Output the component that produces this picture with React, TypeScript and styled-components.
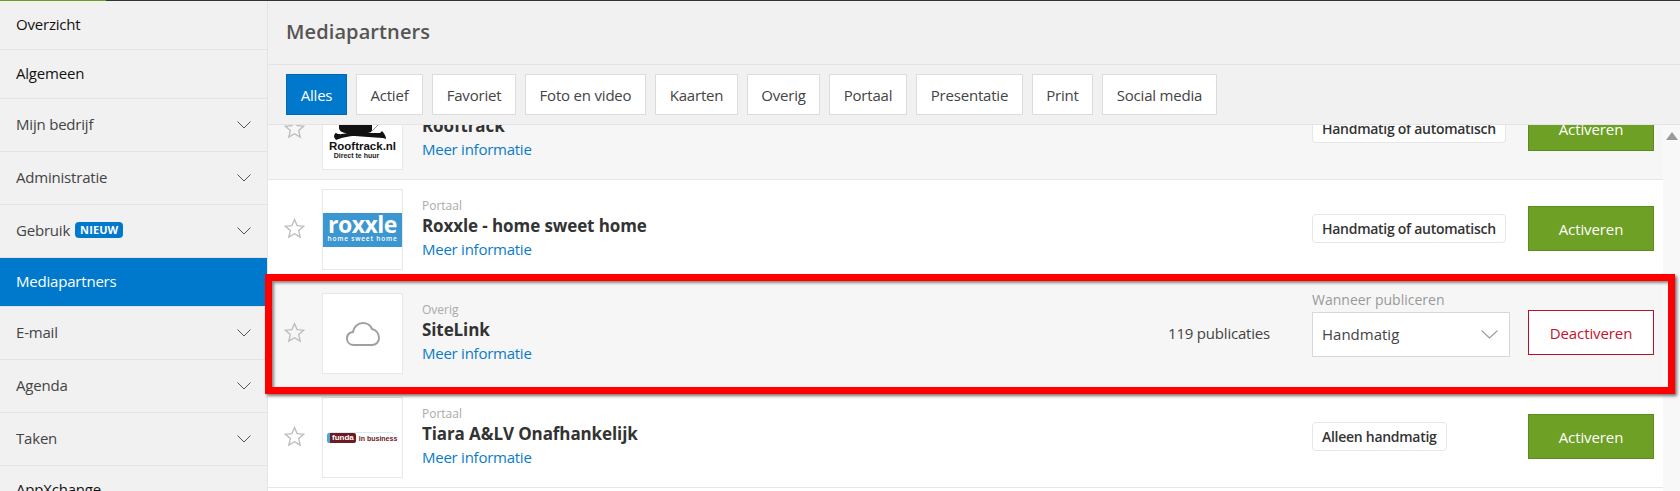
import React from "react";
import styled, { createGlobalStyle } from "styled-components";

const GlobalStyle = createGlobalStyle`
  html, body {
    margin: 0;
    height: 100%;
    overflow: hidden;
    background: #fff;
    font-family: "Open Sans", "Liberation Sans", sans-serif;
  }
  * { box-sizing: border-box; }
`;

//page
const Page = styled.div`
  position: relative;
  width: 1680px;
  height: 491px;
  overflow: hidden;
`;
const TopLine = styled.div`
  height: 1px;
  background: #333;
`;
const TopLineGreen = styled.div`
  width: 106px;
  height: 1px;
  background: #6da025;
`;
const Body = styled.div`
  display: flex;
  height: 490px;
`;

//sidebar
const Sidebar = styled.nav`
  flex: 0 0 268px;
  background: #f1f1f1;
  border-right: 1px solid #e4e4e4;
`;
const NavItem = styled.div<{ $tall?: boolean; $active?: boolean; $strong?: boolean }>`
  height: ${(p) => (p.$tall ? 53 : 49)}px;
  display: flex;
  align-items: center;
  padding: 0 16px 3px 16px;
  font-size: 15px;
  letter-spacing: -0.2px;
  color: ${(p) => (p.$active ? "#fff" : p.$strong ? "#111" : "#444")};
  background: ${(p) => (p.$active ? "#0079cc" : "transparent")};
  border-bottom: 1px solid #e4e4e4;
`;
const NavChevron = styled.span`
  display: block;
  margin: 3px 0 0 auto;
  width: 14px;
  height: 8px;
`;
const NewBadge = styled.span`
  margin-left: 5px;
  padding: 0 5px;
  height: 16px;
  line-height: 16px;
  border-radius: 4px;
  background: #0079cc;
  color: #fff;
  font-size: 11px;
  font-weight: 700;
  letter-spacing: 0.1px;
`;

//main
const Main = styled.main`
  flex: 1;
  min-width: 0;
  display: flex;
  flex-direction: column;
  background: #f1f1f1;
`;
const Header = styled.header`
  height: 64px;
  padding: 0 18px 3px;
  display: flex;
  align-items: center;
  border-bottom: 1px solid #e4e4e4;
`;
const Title = styled.h1`
  margin: 0;
  font-size: 20px;
  font-weight: 600;
  letter-spacing: 0.1px;
  color: #555;
`;
const FilterBar = styled.div`
  height: 60px;
  padding: 9px 18px;
  display: flex;
  gap: 9px;
  border-bottom: 1px solid #e4e4e4;
`;
const FilterButton = styled.div<{ $active?: boolean; $width: number }>`
  flex: 0 0 ${(p) => p.$width}px;
  height: 41px;
  display: flex;
  align-items: center;
  justify-content: center;
  font-size: 15px;
  letter-spacing: -0.2px;
  white-space: nowrap;
  color: ${(p) => (p.$active ? "#fff" : "#444")};
  background: ${(p) => (p.$active ? "#0079cc" : "#fff")};
  border: 1px solid ${(p) => (p.$active ? "#0069b0" : "#dcdcdc")};
`;

//list
const ScrollArea = styled.div`
  flex: 1;
  min-height: 0;
  display: flex;
  overflow: hidden;
  background: #fff;
`;
const List = styled.div`
  flex: 1;
  min-width: 0;
  margin-top: -45px;
`;
const Scrollbar = styled.div`
  flex: 0 0 17px;
  background: #f8f8f8;
  display: flex;
  justify-content: center;
  padding-top: 7px;
`;
const ScrollArrow = styled.div`
  width: 0;
  height: 0;
  border-left: 6px solid transparent;
  border-right: 6px solid transparent;
  border-bottom: 8px solid #999;
`;
const Row = styled.div<{ $tint?: boolean; $wide?: boolean }>`
  display: flex;
  align-items: center;
  padding: ${(p) => (p.$wide ? "12px" : "8px")} 9px ${(p) => (p.$wide ? "14px" : "10px")} 16px;
  background: ${(p) => (p.$tint ? "#f6f6f6" : "#fff")};
  border-bottom: 1px solid #e6e6e6;
`;
const StarIcon = styled.svg`
  flex: 0 0 21px;
  height: 21px;
  margin-right: 17px;
`;
const LogoBox = styled.div`
  flex: 0 0 81px;
  height: 81px;
  margin: 1px 19px -1px 0;
  background: #fff;
  border: 1px solid #e8e8e8;
  display: flex;
  flex-direction: column;
  align-items: center;
  justify-content: center;
  overflow: hidden;
`;
const LogoBoxBottom = styled(LogoBox)`
  justify-content: flex-end;
  padding-bottom: 9px;
`;
const Info = styled.div`
  flex: 1;
  display: flex;
  flex-direction: column;
`;
const Category = styled.div`
  min-height: 18px;
  font-size: 12px;
  line-height: 18px;
  color: #aaa;
`;
const Name = styled.div`
  font-size: 17px;
  line-height: 22px;
  font-weight: 700;
  letter-spacing: -0.1px;
  color: #333;
`;
const MoreLink = styled.a`
  font-size: 15px;
  line-height: 24px;
  letter-spacing: -0.25px;
  color: #0a7bc9;
`;
const Publications = styled.div`
  margin-right: 42px;
  font-size: 15px;
  letter-spacing: -0.2px;
  color: #444;
`;
const PublishColumn = styled.div`
  flex: 0 0 198px;
  margin-right: 18px;
  display: flex;
  flex-direction: column;
  align-items: flex-start;
`;
const PublishColumnLabelled = styled(PublishColumn)`
  margin-top: -20px;
`;
const Pill = styled.div`
  height: 29px;
  padding: 0 9px;
  display: flex;
  align-items: center;
  white-space: nowrap;
  font-size: 14px;
  font-weight: 600;
  letter-spacing: -0.28px;
  color: #333;
  background: #fff;
  border: 1px solid #e6e6e6;
  border-radius: 4px;
`;
const SelectLabel = styled.div`
  font-size: 14px;
  line-height: 21px;
  margin-bottom: 2px;
  color: #999;
`;
const SelectBox = styled.div`
  width: 198px;
  height: 45px;
  padding: 0 11px 0 9px;
  display: flex;
  align-items: center;
  justify-content: space-between;
  font-size: 15px;
  color: #444;
  background: #fff;
  border: 1px solid #d8d8d8;
`;
const SelectChevron = styled.span`
  display: block;
  width: 17px;
  height: 9px;
`;
const ActionButton = styled.div<{ $danger?: boolean }>`
  flex: 0 0 126px;
  height: 45px;
  display: flex;
  align-items: center;
  justify-content: center;
  font-size: 15px;
  letter-spacing: -0.1px;
  color: ${(p) => (p.$danger ? "#c4122f" : "#fff")};
  background: ${(p) => (p.$danger ? "#fff" : "#6da025")};
  border: 1px solid ${(p) => (p.$danger ? "#b8102b" : "#5b8a1e")};
`;

//logos
const RooftrackName = styled.div`
  font-family: "Liberation Sans", sans-serif;
  font-size: 11.5px;
  font-weight: 700;
  line-height: 9px;
  color: #111;
`;
const RooftrackSub = styled.div`
  font-family: "Liberation Sans", sans-serif;
  font-size: 7px;
  font-weight: 700;
  line-height: 9px;
  color: #222;
  margin-right: 12px;
`;
const RoxxleBand = styled.div`
  width: 100%;
  height: 34px;
  background: #3c96cf;
  color: #fff;
  display: flex;
  flex-direction: column;
  align-items: center;
`;
const RoxxleWord = styled.div`
  margin-top: 1px;
  font-size: 23px;
  font-weight: 700;
  line-height: 21px;
  letter-spacing: -0.5px;
`;
const RoxxleTag = styled.div`
  font-size: 6.5px;
  font-weight: 600;
  line-height: 8px;
  letter-spacing: 0.8px;
  white-space: nowrap;
`;
const FundaLogo = styled.div`
  width: 71px;
  height: 12px;
  display: flex;
  align-items: center;
  border-top: 1px solid #d5ecf7;
  border-radius: 4px 8px 0 0;
`;
const FundaMark = styled.span`
  height: 10px;
  padding: 0 2px;
  font-family: "Liberation Sans", sans-serif;
  font-size: 8px;
  line-height: 10px;
  font-weight: 700;
  color: #fff;
  background: #6e1a22;
  border-left: 3px solid #4aa8d8;
  border-radius: 2px;
`;
const FundaText = styled.span`
  margin-left: 3px;
  font-family: "Liberation Sans", sans-serif;
  font-size: 7px;
  font-weight: 700;
  color: #6e1a22;
  white-space: nowrap;
`;

//red annotation round the row
const Highlight = styled.div`
  position: absolute;
  left: 265px;
  top: 274px;
  width: 1410px;
  height: 120px;
  border: 7px solid #f00;
  box-shadow: 2px 2px 3px rgba(0, 0, 0, 0.55), inset 2px 2px 3px rgba(0, 0, 0, 0.45);
  pointer-events: none;
`;

const Chevron = ({ color }: { color: string }) => (
  <svg viewBox="0 0 14 8" width="100%" height="100%" fill="none" stroke={color} strokeWidth="1" style={{ display: "block" }} preserveAspectRatio="none">
    <path d="M0.5 0.5 L7 7 L13.5 0.5" />
  </svg>
);

const Star = () => (
  <StarIcon viewBox="0 0 21 21" fill="none" stroke="#bbb" strokeWidth="1.3" strokeLinejoin="miter">
    <path d="M10.5 1.6 L13.1 7.6 L19.7 8.2 L14.7 12.6 L16.2 19.1 L10.5 15.7 L4.8 19.1 L6.3 12.6 L1.3 8.2 L7.9 7.6 Z" />
  </StarIcon>
);

const RooftrackLogo = () => (
  <LogoBoxBottom>
    <svg width="79" height="42" viewBox="0 0 79 42" style={{ flex: "0 0 42px" }}>
      <path
        d="M16 0 H49 V30 C49 32 47 33 44 33 H57 L59 31 C61 33 63 36 63 39 L60 38 C50 37 40 37 32 36 C26 36 18 38 13 40 L11 37 C11 35 12 33 13 33 C16 35 20 34 24 33 C20 33 16 31 16 28 Z"
        fill="#111"
      />
      <path d="M49 31 L58 22" stroke="#999" strokeWidth="1" fill="none" />
    </svg>
    <RooftrackName>Rooftrack.nl</RooftrackName>
    <RooftrackSub>Direct te huur</RooftrackSub>
  </LogoBoxBottom>
);

const RoxxleLogo = () => (
  <LogoBox>
    <RoxxleBand>
      <RoxxleWord>roxxle</RoxxleWord>
      <RoxxleTag>home sweet home</RoxxleTag>
    </RoxxleBand>
  </LogoBox>
);

const CloudLogo = () => (
  <LogoBox>
    <svg width="36" height="26" viewBox="0 0 36 26" fill="none" stroke="#a0a0a0" strokeWidth="2">
      <path d="M9 24 C4.5 24 2 21 2 17.5 C2 14 4.5 11.5 8 11 C8.8 5.5 13 2 18 2 C22.5 2 25.5 4.5 27 8 C31 9 34 12.5 34 17 C34 21 31 24 27 24 Z" />
    </svg>
  </LogoBox>
);

const TiaraLogo = () => (
  <LogoBox>
    <FundaLogo>
      <FundaMark>funda</FundaMark>
      <FundaText>in business</FundaText>
    </FundaLogo>
  </LogoBox>
);

const navItems = [
  { label: "Overzicht", strong: true },
  { label: "Algemeen", strong: true },
  { label: "Mijn bedrijf", tall: true },
  { label: "Administratie", tall: true },
  { label: "Gebruik", tall: true, badge: "NIEUW" },
  { label: "Mediapartners", active: true },
  { label: "E-mail", tall: true },
  { label: "Agenda", tall: true },
  { label: "Taken", tall: true },
  { label: "AppXchange", strong: true },
];

const filters = [
  { label: "Alles", width: 61, active: true },
  { label: "Actief", width: 67 },
  { label: "Favoriet", width: 84 },
  { label: "Foto en video", width: 121 },
  { label: "Kaarten", width: 83 },
  { label: "Overig", width: 73 },
  { label: "Portaal", width: 78 },
  { label: "Presentatie", width: 107 },
  { label: "Print", width: 61 },
  { label: "Social media", width: 115 },
];

export default function App() {
  return (
    <Page>
      <GlobalStyle />
      <TopLine>
        <TopLineGreen />
      </TopLine>
      <Body>
        <Sidebar>
          {navItems.map((item) => (
            <NavItem key={item.label} $tall={item.tall} $active={item.active} $strong={item.strong}>
              {item.label}
              {item.badge && <NewBadge>{item.badge}</NewBadge>}
              {item.tall && (
                <NavChevron>
                  <Chevron color="#555" />
                </NavChevron>
              )}
            </NavItem>
          ))}
        </Sidebar>
        <Main>
          <Header>
            <Title>Mediapartners</Title>
          </Header>
          <FilterBar>
            {filters.map((f) => (
              <FilterButton key={f.label} $width={f.width} $active={f.active}>
                {f.label}
              </FilterButton>
            ))}
          </FilterBar>
          <ScrollArea>
            <List>
              <Row $tint>
                <Star />
                <RooftrackLogo />
                <Info>
                  <Category />
                  <Name>Rooftrack</Name>
                  <MoreLink>Meer informatie</MoreLink>
                </Info>
                <PublishColumn>
                  <Pill>Handmatig of automatisch</Pill>
                </PublishColumn>
                <ActionButton>Activeren</ActionButton>
              </Row>
              <Row>
                <Star />
                <RoxxleLogo />
                <Info>
                  <Category>Portaal</Category>
                  <Name>Roxxle - home sweet home</Name>
                  <MoreLink>Meer informatie</MoreLink>
                </Info>
                <PublishColumn>
                  <Pill>Handmatig of automatisch</Pill>
                </PublishColumn>
                <ActionButton>Activeren</ActionButton>
              </Row>
              <Row $tint $wide>
                <Star />
                <CloudLogo />
                <Info>
                  <Category>Overig</Category>
                  <Name>SiteLink</Name>
                  <MoreLink>Meer informatie</MoreLink>
                </Info>
                <Publications>119 publicaties</Publications>
                <PublishColumnLabelled>
                  <SelectLabel>Wanneer publiceren</SelectLabel>
                  <SelectBox>
                    Handmatig
                    <SelectChevron>
                      <Chevron color="#999" />
                    </SelectChevron>
                  </SelectBox>
                </PublishColumnLabelled>
                <ActionButton $danger>Deactiveren</ActionButton>
              </Row>
              <Row>
                <Star />
                <TiaraLogo />
                <Info>
                  <Category>Portaal</Category>
                  <Name>Tiara A&amp;LV Onafhankelijk</Name>
                  <MoreLink>Meer informatie</MoreLink>
                </Info>
                <PublishColumn>
                  <Pill>Alleen handmatig</Pill>
                </PublishColumn>
                <ActionButton>Activeren</ActionButton>
              </Row>
            </List>
            <Scrollbar>
              <ScrollArrow />
            </Scrollbar>
          </ScrollArea>
        </Main>
      </Body>
      <Highlight />
    </Page>
  );
}
